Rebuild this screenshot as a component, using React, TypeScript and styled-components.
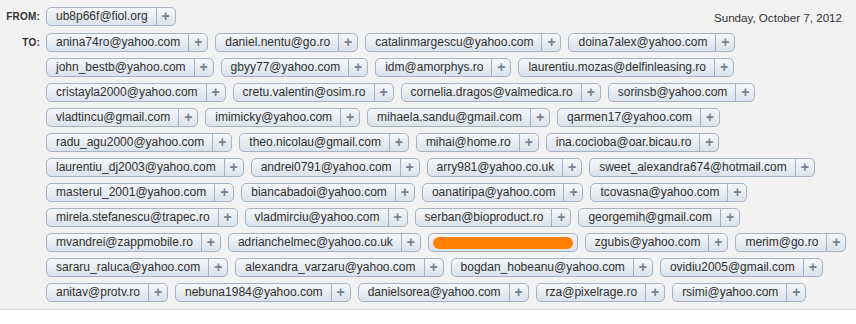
import styled, { createGlobalStyle } from 'styled-components';

const GlobalStyle = createGlobalStyle`
  html, body {
    margin: 0;
    padding: 0;
    background: #ffffff;
    font-family: "Liberation Sans", Arial, Helvetica, sans-serif;
  }
`;

const Header = styled.div`
  background: #f2f2f2;
  border-bottom: 1px solid #dcdcdc;
  padding: 7px 14px 7px 0;
  height: 310px;
  box-sizing: border-box;
`;

const FieldRow = styled.div`
  display: flex;
  align-items: flex-start;
`;

const Label = styled.div<{ offset?: number }>`
  width: 40px;
  flex: none;
  text-align: right;
  font-size: 10px;
  font-weight: bold;
  color: #333;
  line-height: 20px;
  margin-right: 6px;
  margin-top: ${({ offset }) => offset ?? 0}px;
  letter-spacing: 0.2px;
`;

const DateText = styled.div`
  margin-left: auto;
  font-size: 11.6px;
  color: #333;
  line-height: 20px;
  padding-top: 1px;
`;

const Rows = styled.div`
  display: flex;
  flex-direction: column;
  gap: 6px;
  margin-top: 5px;
`;

const Line = styled.div`
  display: flex;
  gap: 7px;
`;

const Pill = styled.div`
  display: flex;
  height: 19px;
  box-sizing: border-box;
  border: 1px solid #a6b1c1;
  border-radius: 5px;
  background: linear-gradient(#f5f7fa, #dbe2eb);
  color: #2f2f2f;
  font-size: 12px;
  line-height: 17px;
  overflow: hidden;
`;

const Address = styled.span`
  padding: 0 8px 0 9px;
  white-space: nowrap;
`;

const Plus = styled.span`
  width: 18px;
  border-left: 1px solid #a6b1c1;
  display: flex;
  align-items: center;
  justify-content: center;
  color: #76818f;
  font-size: 14px;
  font-weight: bold;
`;

const Redacted = styled.span<{ w: number }>`
  display: block;
  margin: 3px 4px;
  height: 12px;
  width: ${({ w }) => w}px;
  border-radius: 6px;
  background: #ff7f00;
`;

const rows: (string | null)[][] = [
  ['anina74ro@yahoo.com', 'daniel.nentu@go.ro', 'catalinmargescu@yahoo.com', 'doina7alex@yahoo.com'],
  ['john_bestb@yahoo.com', 'gbyy77@yahoo.com', 'idm@amorphys.ro', 'laurentiu.mozas@delfinleasing.ro'],
  ['cristayla2000@yahoo.com', 'cretu.valentin@osim.ro', 'cornelia.dragos@valmedica.ro', 'sorinsb@yahoo.com'],
  ['vladtincu@gmail.com', 'imimicky@yahoo.com', 'mihaela.sandu@gmail.com', 'qarmen17@yahoo.com'],
  ['radu_agu2000@yahoo.com', 'theo.nicolau@gmail.com', 'mihai@home.ro', 'ina.cocioba@oar.bicau.ro'],
  ['laurentiu_dj2003@yahoo.com', 'andrei0791@yahoo.com', 'arry981@yahoo.co.uk', 'sweet_alexandra674@hotmail.com'],
  ['masterul_2001@yahoo.com', 'biancabadoi@yahoo.com', 'oanatiripa@yahoo.com', 'tcovasna@yahoo.com'],
  ['mirela.stefanescu@trapec.ro', 'vladmirciu@yahoo.com', 'serban@bioproduct.ro', 'georgemih@gmail.com'],
  ['mvandrei@zappmobile.ro', 'adrianchelmec@yahoo.co.uk', null, 'zgubis@yahoo.com', 'merim@go.ro'],
  ['sararu_raluca@yahoo.com', 'alexandra_varzaru@yahoo.com', 'bogdan_hobeanu@yahoo.com', 'ovidiu2005@gmail.com'],
  ['anitav@protv.ro', 'nebuna1984@yahoo.com', 'danielsorea@yahoo.com', 'rza@pixelrage.ro', 'rsimi@yahoo.com'],
];

function AddressPill({ email }: { email: string | null }) {
  if (email === null) {
    return (
      <Pill>
        <Redacted w={140} />
      </Pill>
    );
  }
  return (
    <Pill>
      <Address>{email}</Address>
      <Plus>+</Plus>
    </Pill>
  );
}

export default function App() {
  return (
    <>
      <GlobalStyle />
      <Header>
        <FieldRow>
          <Label>FROM:</Label>
          <AddressPill email="ub8p66f@fiol.org" />
          <DateText>Sunday, October 7, 2012</DateText>
        </FieldRow>
        <FieldRow>
          <Label offset={5}>TO:</Label>
          <Rows>
            {rows.map((line, i) => (
              <Line key={i}>
                {line.map((email, j) => (
                  <AddressPill key={j} email={email} />
                ))}
              </Line>
            ))}
          </Rows>
        </FieldRow>
      </Header>
    </>
  );
}
